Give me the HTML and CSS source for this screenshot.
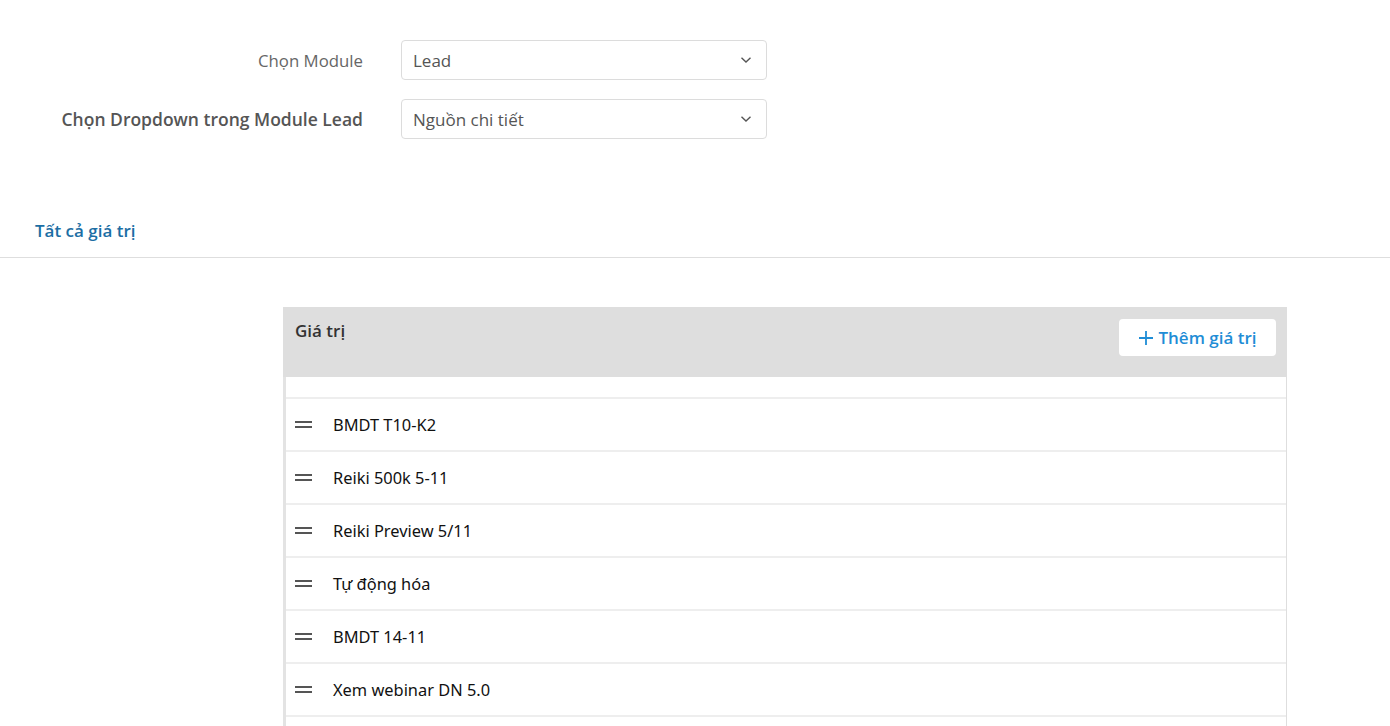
FILE: index.html
```html
<!DOCTYPE html>
<html lang="vi">
<head>
  <meta charset="UTF-8" />
  <meta name="viewport" content="width=device-width, initial-scale=1.0"/>
  <title>Giá trị Dropdown</title>
  <link rel="stylesheet" href="styles.css">
</head>
<body>
  <div class="bo-loc">
    <div class="dong-loc">
      <label class="nhan" for="module">Chọn Module</label>
      <div class="hop-chon">
        <span>Lead</span>
        <svg class="mui-ten" width="12" height="8" viewBox="0 0 12 8"><path d="M1.5 1.8 L6 6 L10.5 1.8" fill="none" stroke="#555" stroke-width="1.4"/></svg>
      </div>
    </div>
    <div class="dong-loc">
      <label class="nhan dam" for="dropdown">Chọn Dropdown trong Module Lead</label>
      <div class="hop-chon">
        <span>Nguồn chi tiết</span>
        <svg class="mui-ten" width="12" height="8" viewBox="0 0 12 8"><path d="M1.5 1.8 L6 6 L10.5 1.8" fill="none" stroke="#555" stroke-width="1.4"/></svg>
      </div>
    </div>
  </div>

  <div class="tab">
    <a class="tab-muc">Tất cả giá trị</a>
  </div>

  <div class="bang">
    <div class="bang-dau">
      <span class="tieu-de">Giá trị</span>
      <button class="nut-them">
        <svg width="16" height="16" viewBox="0 0 16 16"><path d="M8 1 V15 M1 8 H15" stroke="#1f8dd6" stroke-width="1.8"/></svg>
        Thêm giá trị
      </button>
    </div>
    <div class="dong-trong"></div>
    <div id="danhSach"></div>
    <div class="dong"></div>
  </div>

  <script>
    const giaTri = ['BMDT T10-K2', 'Reiki 500k 5-11', 'Reiki Preview 5/11', 'Tự động hóa', 'BMDT 14-11', 'Xem webinar DN 5.0'];
    const danhSach = document.getElementById('danhSach');
    giaTri.forEach(t => {
      const div = document.createElement('div');
      div.className = 'dong';
      div.innerHTML = `<span class="keo"></span><span class="chu">${t}</span>`;
      danhSach.appendChild(div);
    });
  </script>
</body>
</html>
```

FILE: styles.css
```css
body {
  margin: 0;
  font-family: "Open Sans", Arial, sans-serif;
  background: #ffffff;
  color: #333;
}

.bo-loc {
  padding-top: 40px;
  display: flex;
  flex-direction: column;
  gap: 19px;
}

.dong-loc {
  display: flex;
  align-items: center;
}

.nhan {
  width: 363px;
  text-align: right;
  font-size: 16.8px;
  color: #666;
  padding-right: 38px;
  box-sizing: content-box;
}

.nhan.dam {
  font-size: 17.5px;
  font-weight: 600;
  color: #555;
}

.hop-chon {
  width: 366px;
  height: 40px;
  box-sizing: border-box;
  border: 1px solid #dcdcdc;
  border-radius: 4px;
  display: flex;
  align-items: center;
  justify-content: space-between;
  padding: 0 14px 0 11px;
  font-size: 17px;
  color: #555;
}

.mui-ten {
  display: block;
}

.tab {
  margin-top: 75px;
  height: 43px;
  border-bottom: 1px solid #dedede;
  padding-left: 35px;
}

.tab-muc {
  display: inline-block;
  margin-top: 5px;
  font-size: 17px;
  font-weight: 600;
  color: #1c6ea4;
}

.bang {
  margin: 49px 0 0 283px;
  width: 1004px;
  box-sizing: border-box;
  border-left: 3px solid #e3e3e3;
  border-right: 1px solid #dedede;
}

.bang-dau {
  background: #dedede;
  height: 70px;
  margin-left: -3px;
  margin-right: -1px;
  display: flex;
  justify-content: space-between;
  align-items: flex-start;
  padding: 12px 11px 0 12px;
  box-sizing: border-box;
}

.tieu-de {
  font-size: 17px;
  font-weight: 600;
  color: #333;
}

.nut-them {
  background: #ffffff;
  border: none;
  border-radius: 4px;
  height: 37px;
  width: 157px;
  display: flex;
  align-items: center;
  justify-content: center;
  gap: 4px;
  font-family: "Open Sans", Arial, sans-serif;
  font-size: 17px;
  font-weight: 600;
  color: #1f8dd6;
  cursor: pointer;
}

.dong-trong {
  height: 20px;
  border-bottom: 2px solid #eeeeee;
}

.dong {
  height: 53px;
  display: flex;
  align-items: center;
  border-bottom: 2px solid #eeeeee;
  box-sizing: border-box;
  padding-left: 9px;
  font-family: "Noto Sans", "Open Sans", Arial, sans-serif;
  font-size: 16.4px;
  color: #111;
}

.keo {
  width: 17px;
  height: 7px;
  border-top: 2px solid #555;
  border-bottom: 2px solid #555;
  box-sizing: border-box;
  margin-right: 21px;
}
```
